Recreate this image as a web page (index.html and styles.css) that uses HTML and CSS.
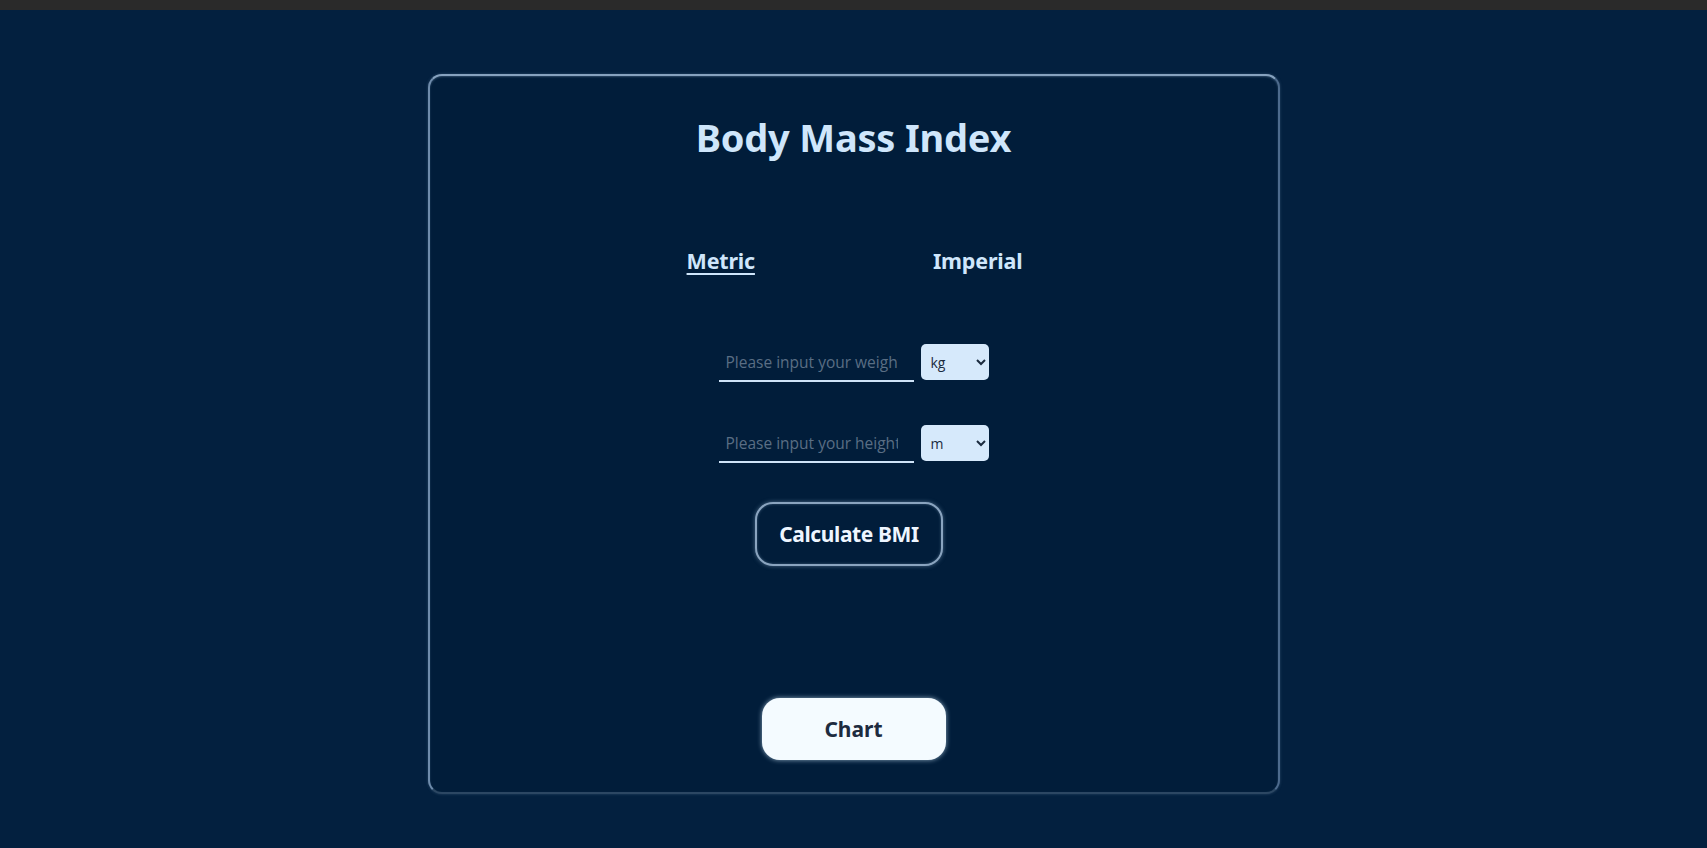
FILE: index.html
```html
<!DOCTYPE html>
<html lang="en">
<head>
<meta charset="utf-8">
<title>Body Mass Index</title>
<link rel="stylesheet" href="styles.css">
</head>
<body>
<div class="topbar"></div>
<main class="page">
  <section class="card">
    <h1 class="title">Body Mass Index</h1>
    <nav class="tabs">
      <span class="tab active">Metric</span>
      <span class="tab">Imperial</span>
    </nav>
    <form class="form">
      <div class="row">
        <input class="field" type="text" placeholder="Please input your weight">
        <select class="unit"><option>kg</option><option>g</option></select>
      </div>
      <div class="row">
        <input class="field" type="text" placeholder="Please input your height">
        <select class="unit"><option>m</option><option>cm</option></select>
      </div>
      <button type="button" class="calc">Calculate BMI</button>
    </form>
    <button type="button" class="chart">Chart</button>
  </section>
</main>
</body>
</html>
```

FILE: styles.css
```css
* { box-sizing: border-box; }
html, body { margin: 0; padding: 0; }
body {
  background: #03203f;
  font-family: "Noto Sans", "Open Sans", "DejaVu Sans", sans-serif;
  height: 848px;
  overflow: hidden;
}
.topbar {
  height: 10px;
  background: #2a2a2a;
}
.page {
  display: flex;
  justify-content: center;
  padding-top: 64px;
}
.card {
  width: 852px;
  height: 720px;
  background: #011d3a;
  border: 2px solid;
  border-color: #86a2bf #4d6b8d #2c4763 #6f8cac;
  border-radius: 14px;
  box-shadow: 0 0 3px rgba(120, 150, 180, 0.35), inset 0 1px 2px rgba(150, 180, 210, 0.3);
  display: flex;
  flex-direction: column;
  align-items: center;
  padding-top: 36px;
}
.title {
  margin: 0;
  font-size: 38px;
  line-height: 50px;
  font-weight: 700;
  color: #cfe6fb;
  letter-spacing: -0.2px;
}
.tabs {
  margin-top: 84px;
  display: flex;
  gap: 178px;
  margin-left: 2px;
}
.tab {
  font-size: 21.5px;
  line-height: 30px;
  font-weight: 700;
  color: #cfe6fb;
  letter-spacing: -0.2px;
}
.tab.active {
  text-decoration: underline;
  text-decoration-thickness: 2px;
  text-underline-offset: 4px;
}
.form {
  margin-top: 68px;
  display: flex;
  flex-direction: column;
  align-items: center;
}
.row {
  display: flex;
  align-items: flex-start;
  gap: 7px;
  margin-bottom: 43px;
}
.field {
  width: 195px;
  height: 38px;
  background: transparent;
  border: none;
  border-bottom: 2px solid #cfe3f7;
  padding: 0 16px 0 7px;
  font-family: "Open Sans", "Noto Sans", sans-serif;
  font-size: 15.5px;
  color: #cfe6fb;
  outline: none;
}
.field::placeholder { color: #5a6e84; }
.unit {
  width: 68px;
  height: 36px;
  background-color: #d6e9fb;
  border: none;
  border-radius: 5px;
  padding: 0 6px;
  font-family: "Open Sans", "Noto Sans", sans-serif;
  font-size: 14px;
  color: #1b2b3e;
}
.calc {
  margin-top: -4px;
  margin-right: 9px;
  width: 188px;
  height: 64px;
  background: #011d3a;
  border: 2px solid #8aa4bf;
  border-radius: 18px;
  box-shadow: 0 0 4px rgba(150, 180, 210, 0.5), inset 0 0 3px rgba(150, 180, 210, 0.4);
  color: #eef6ff;
  font-family: "Noto Sans", sans-serif;
  font-size: 21px;
  font-weight: 700;
  letter-spacing: -0.4px;
}
.chart {
  margin-top: 132px;
  width: 184px;
  height: 62px;
  background: #f4fbff;
  border: none;
  border-radius: 18px;
  box-shadow: 0 0 5px rgba(200, 225, 245, 0.7);
  color: #1d2b3f;
  font-family: "Noto Sans", sans-serif;
  font-size: 21px;
  font-weight: 700;
}
```
